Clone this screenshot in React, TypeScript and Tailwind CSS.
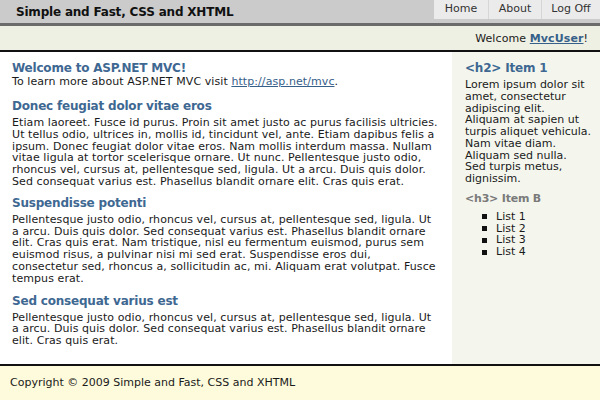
import React from 'react';

const font = { fontFamily: '"DejaVu Sans", Verdana, sans-serif' };

const navItems = [
  { label: 'Home', w: 'w-[54px]' },
  { label: 'About', w: 'w-[53px]' },
  { label: 'Log Off', w: 'w-[59px]' },
];

// lines are broken where the original page wraps them
const sections = [
  {
    title: 'Donec feugiat dolor vitae eros',
    gap: 'mt-[10px]',
    lines: [
      'Etiam laoreet. Fusce id purus. Proin sit amet justo ac purus facilisis ultricies.',
      'Ut tellus odio, ultrices in, mollis id, tincidunt vel, ante. Etiam dapibus felis a',
      'ipsum. Donec feugiat dolor vitae eros. Nam mollis interdum massa. Nullam',
      'vitae ligula at tortor scelerisque ornare. Ut nunc. Pellentesque justo odio,',
      'rhoncus vel, cursus at, pellentesque sed, ligula. Ut a arcu. Duis quis dolor.',
      'Sed consequat varius est. Phasellus blandit ornare elit. Cras quis erat.',
    ],
  },
  {
    title: 'Suspendisse potenti',
    gap: 'mt-[7px]',
    lines: [
      'Pellentesque justo odio, rhoncus vel, cursus at, pellentesque sed, ligula. Ut',
      'a arcu. Duis quis dolor. Sed consequat varius est. Phasellus blandit ornare',
      'elit. Cras quis erat. Nam tristique, nisl eu fermentum euismod, purus sem',
      'euismod risus, a pulvinar nisi mi sed erat. Suspendisse eros dui,',
      'consectetur sed, rhoncus a, sollicitudin ac, mi. Aliquam erat volutpat. Fusce',
      'tempus erat.',
    ],
  },
  {
    title: 'Sed consequat varius est',
    gap: 'mt-[8px]',
    lines: [
      'Pellentesque justo odio, rhoncus vel, cursus at, pellentesque sed, ligula. Ut',
      'a arcu. Duis quis dolor. Sed consequat varius est. Phasellus blandit ornare',
      'elit. Cras quis erat.',
    ],
  },
];

const sideLines = [
  'Lorem ipsum dolor sit',
  'amet, consectetur',
  'adipiscing elit.',
  'Aliquam at sapien ut',
  'turpis aliquet vehicula.',
  'Nam vitae diam.',
  'Aliquam sed nulla.',
  'Sed turpis metus,',
  'dignissim.',
];

const headingCls = 'text-[12px] leading-4 font-bold tracking-[-0.2px] text-[#3e6892]';

export default function App() {
  return (
    <div className="h-[400px] w-[600px] flex flex-col text-[11px] text-[#1a1a1a] overflow-hidden" style={font}>
      {/* Header */}
      <div className="h-[26px] bg-[#cbcbcb] border-b-[3px] border-[#6b6b6b] flex items-start justify-between">
        <h1 className="pl-[16px] pt-[4px] text-[12px] leading-4 font-bold tracking-[-0.2px] text-[#111]">
          Simple and Fast, CSS and XHTML
        </h1>
        <ul className="flex">
          {navItems.map((item, i) => (
            <li
              key={item.label}
              className={`${item.w} h-[19px] bg-[#ebebeb] flex items-center justify-center text-[#333] ${i > 0 ? 'border-l border-[#d6d6d6]' : ''}`}
            >
              {item.label}
            </li>
          ))}
        </ul>
      </div>

      {/* Welcome bar */}
      <div className="h-[26px] bg-[#eef0e3] border-b-2 border-[#111] flex items-center justify-end pr-[12px] pt-[2px]">
        <span className="tracking-[0.1px]">
          Welcome <a className="font-bold text-[#36608a] underline">MvcUser</a>!
        </span>
      </div>

      {/* Main */}
      <div className="flex-1 flex">
        <div className="w-[452px] bg-white pl-[12px] pt-[8px] tracking-[0.08px]">
          <h2 className={headingCls}>Welcome to ASP.NET MVC!</h2>
          <p className="leading-[12px]">
            To learn more about ASP.NET MVC visit{' '}
            <a className="text-[#36608a] underline">http://asp.net/mvc</a>.
          </p>
          {sections.map((s) => (
            <div key={s.title} className={s.gap}>
              <h2 className={headingCls}>{s.title}</h2>
              <p className="leading-[11.8px] mt-[3px]">
                {s.lines.map((l) => (
                  <span key={l} className="block whitespace-nowrap">
                    {l}
                  </span>
                ))}
              </p>
            </div>
          ))}
        </div>
        <div className="flex-1 bg-[#f4f6ee] pl-[13px] pt-[8px]">
          <h2 className={headingCls}>&lt;h2&gt; Item 1</h2>
          <p className="leading-[11.75px] mt-[3px]">
            {sideLines.map((l) => (
              <span key={l} className="block whitespace-nowrap">
                {l}
              </span>
            ))}
          </p>
          <h3 className="mt-[6px] leading-4 font-bold tracking-[-0.2px] text-[#7a7a7a]">&lt;h3&gt; Item B</h3>
          <ul className="mt-[4px] pl-[17px]">
            {['List 1', 'List 2', 'List 3', 'List 4'].map((l) => (
              <li key={l} className="flex items-center leading-[11.8px]">
                <span className="w-[5px] h-[5px] bg-[#111] mr-[9px]" />
                {l}
              </li>
            ))}
          </ul>
        </div>
      </div>

      {/* Footer */}
      <div className="h-[36px] bg-[#fdfbdb] border-t-2 border-[#111] flex items-center pl-[10px]">
        Copyright © 2009 Simple and Fast, CSS and XHTML
      </div>
    </div>
  );
}
